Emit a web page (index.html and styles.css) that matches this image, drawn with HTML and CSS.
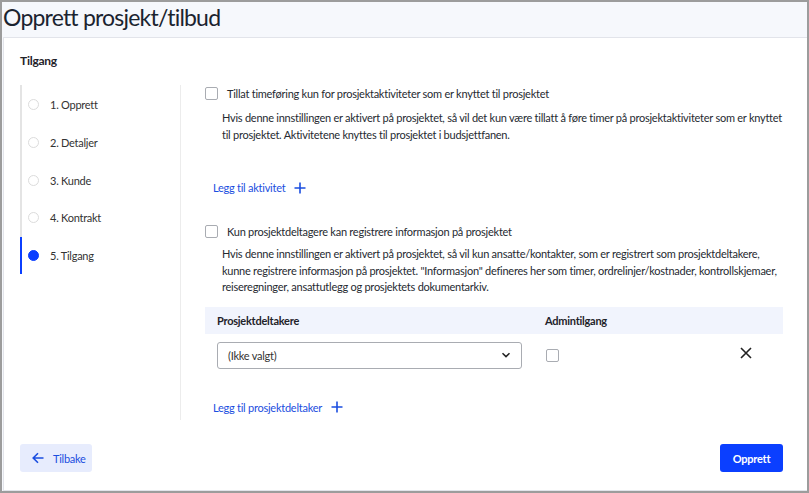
FILE: index.html
```html
<!DOCTYPE html>
<html lang="no">
<head>
    <meta charset="UTF-8">
    <title>Opprett prosjekt/tilbud</title>
    <link rel="stylesheet" href="styles.css">
</head>
<body>

<div class="window">
    <div class="top-bar">
        <h1>Opprett prosjekt/tilbud</h1>
    </div>

    <div class="card">
        <h2 class="section-title">Tilgang</h2>

        <div class="wizard">
            <!-- Steps -->
            <div class="steps-col">
                <ul class="steps">
                    <li class="step"><span class="dot"></span>1. Opprett</li>
                    <li class="step"><span class="dot"></span>2. Detaljer</li>
                    <li class="step"><span class="dot"></span>3. Kunde</li>
                    <li class="step"><span class="dot"></span>4. Kontrakt</li>
                    <li class="step active"><span class="dot"></span>5. Tilgang</li>
                </ul>
            </div>

            <!-- Settings -->
            <div class="content">
                <div class="option">
                    <label class="check-row">
                        <span class="checkbox"></span>
                        Tillat timeføring kun for prosjektaktiviteter som er knyttet til prosjektet
                    </label>
                    <p class="help">Hvis denne innstillingen er aktivert på prosjektet, så vil det kun være tillatt å føre timer på prosjektaktiviteter som er knyttet til prosjektet. Aktivitetene knyttes til prosjektet i budsjettfanen.</p>
                </div>

                <a class="add-link add-activity" href="#">Legg til aktivitet
                    <svg width="12" height="12" viewBox="0 0 12 12"><path d="M6 0.5v11M0.5 6h11" stroke="currentColor" stroke-width="1.6" fill="none"/></svg>
                </a>

                <div class="option option-second">
                    <label class="check-row">
                        <span class="checkbox"></span>
                        Kun prosjektdeltagere kan registrere informasjon på prosjektet
                    </label>
                    <p class="help">Hvis denne innstillingen er aktivert på prosjektet, så vil kun ansatte/kontakter, som er registrert som prosjektdeltakere, kunne registrere informasjon på prosjektet. "Informasjon" defineres her som timer, ordrelinjer/kostnader, kontrollskjemaer, reiseregninger, ansattutlegg og prosjektets dokumentarkiv.</p>
                </div>

                <div class="members">
                    <div class="members-head">
                        <span class="col-name">Prosjektdeltakere</span>
                        <span class="col-admin">Admintilgang</span>
                    </div>
                    <div class="members-row">
                        <div class="col-name">
                            <div class="select">
                                <span>(Ikke valgt)</span>
                                <svg width="10" height="6" viewBox="0 0 10 6"><path d="M1.5 1.2L5 4.6l3.5-3.4" stroke="#222" stroke-width="1.5" fill="none"/></svg>
                            </div>
                        </div>
                        <div class="col-admin"><span class="checkbox"></span></div>
                        <div class="col-remove">
                            <svg width="12" height="12" viewBox="0 0 12 12"><path d="M1 1l10 10M11 1L1 11" stroke="#222" stroke-width="1.6" fill="none"/></svg>
                        </div>
                    </div>
                </div>

                <a class="add-link add-member" href="#">Legg til prosjektdeltaker
                    <svg width="12" height="12" viewBox="0 0 12 12"><path d="M6 0.5v11M0.5 6h11" stroke="currentColor" stroke-width="1.6" fill="none"/></svg>
                </a>
            </div>
        </div>

        <div class="footer">
            <button class="btn btn-back">
                <svg width="12" height="12" viewBox="0 0 12 12"><path d="M11.5 6H1.2M6 1.2L1.2 6 6 10.8" stroke="currentColor" stroke-width="1.6" fill="none"/></svg>
                Tilbake
            </button>
            <button class="btn btn-primary">Opprett</button>
        </div>
    </div>
</div>

</body>
</html>
```

FILE: styles.css
```css
* {
    box-sizing: border-box;
}
body {
    margin: 0;
    font-family: Lato, "Open Sans", Arial, sans-serif;
    letter-spacing: -0.25px;
    color: #262a31;
    background: #fff;
}
.window {
    height: 493px;
    border: 2px solid #9c9c9c;
    background-color: #f6f8fc;
    display: flex;
    flex-direction: column;
}
.top-bar {
    height: 35px;
    padding-left: 1px;
}
.top-bar h1 {
    margin: 0;
    font-size: 23px;
    font-weight: 400;
    letter-spacing: -0.8px;
    line-height: 30px;
    color: #1b2430;
}
.card {
    flex: 1;
    margin-left: 1px;
    background: #fff;
    border: 1px solid #e2e4ea;
    border-right: none;
    padding: 16px 24px 0 16px;
    display: flex;
    flex-direction: column;
}
.section-title {
    margin: 0;
    font-size: 12px;
    font-weight: 700;
    line-height: 14px;
    color: #1f232a;
}
.wizard {
    display: flex;
    margin-top: 17px;
    height: 335px;
}
.steps-col {
    width: 161px;
    border-right: 1px solid #ececec;
}
.steps {
    list-style: none;
    margin: 0;
    padding: 0;
    border-left: 2px solid #e4e4e4;
}
.step {
    display: flex;
    align-items: center;
    height: 38px;
    padding-left: 6px;
    font-size: 11px;
    color: #333;
    margin-left: -2px;
    border-left: 2px solid transparent;
}
.step:nth-child(4),
.step:nth-child(5) {
    height: 37.5px;
}
.step.active {
    border-left-color: #0b3fff;
}
.dot {
    width: 11px;
    height: 11px;
    border-radius: 50%;
    border: 1px solid #dcdcdc;
    margin-right: 11px;
}
.step.active .dot {
    background: #0b3fff;
    border-color: #0b3fff;
}
.content {
    flex: 1;
    padding-left: 24px;
    padding-top: 1px;
}
.check-row {
    display: flex;
    align-items: center;
    font-size: 11px;
    height: 14px;
}
.checkbox {
    display: inline-block;
    flex-shrink: 0;
    width: 13px;
    height: 13px;
    border: 1px solid #a9acb2;
    border-radius: 2px;
    background: #fff;
    margin-right: 9px;
}
.help {
    margin: 9px 0 0 17px;
    font-size: 11px;
    line-height: 17px;
}
.add-link {
    display: inline-flex;
    align-items: center;
    gap: 9px;
    margin-left: 8px;
    font-size: 11px;
    color: #1b4ee0;
    text-decoration: none;
}
.add-link svg {
    color: #1b4ee0;
}
.add-activity {
    margin-top: 38px;
}
.option-second {
    margin-top: 29px;
}
.option-second .help {
    line-height: 16.5px;
    margin-top: 8px;
}
.members {
    margin-top: 11px;
}
.members-head {
    display: flex;
    align-items: center;
    height: 27px;
    background: #f1f4fd;
    font-size: 11px;
    font-weight: 700;
    color: #1f232a;
}
.members-head .col-name,
.members-row .col-name {
    width: 340px;
    padding-left: 12px;
}
.members-row {
    display: flex;
    align-items: center;
    padding-top: 8px;
}
.select {
    width: 305px;
    height: 27px;
    border: 1px solid #a9acb2;
    border-radius: 3px;
    display: flex;
    align-items: center;
    justify-content: space-between;
    padding: 0 10px 0 10px;
    font-size: 11px;
    color: #333;
}
.col-admin {
    width: 180px;
}
.members-row .col-admin .checkbox {
    margin-left: 1px;
}
.col-remove {
    padding-left: 15px;
    padding-bottom: 6px;
}
.add-member {
    margin-top: 32px;
}
.footer {
    display: flex;
    justify-content: space-between;
    margin-top: 24px;
}
.btn {
    height: 28px;
    border: none;
    border-radius: 3px;
    font-family: inherit;
    font-size: 11px;
    letter-spacing: -0.25px;
    cursor: pointer;
}
.btn svg {
    flex-shrink: 0;
}
.btn-back {
    background: #e7ecfd;
    color: #1b4ee0;
    display: flex;
    align-items: center;
    gap: 9px;
    padding: 0 12px;
    width: 72px;
}
.btn-primary {
    background: #0b3fff;
    color: #fff;
    width: 63px;
    font-weight: 700;
}
```
